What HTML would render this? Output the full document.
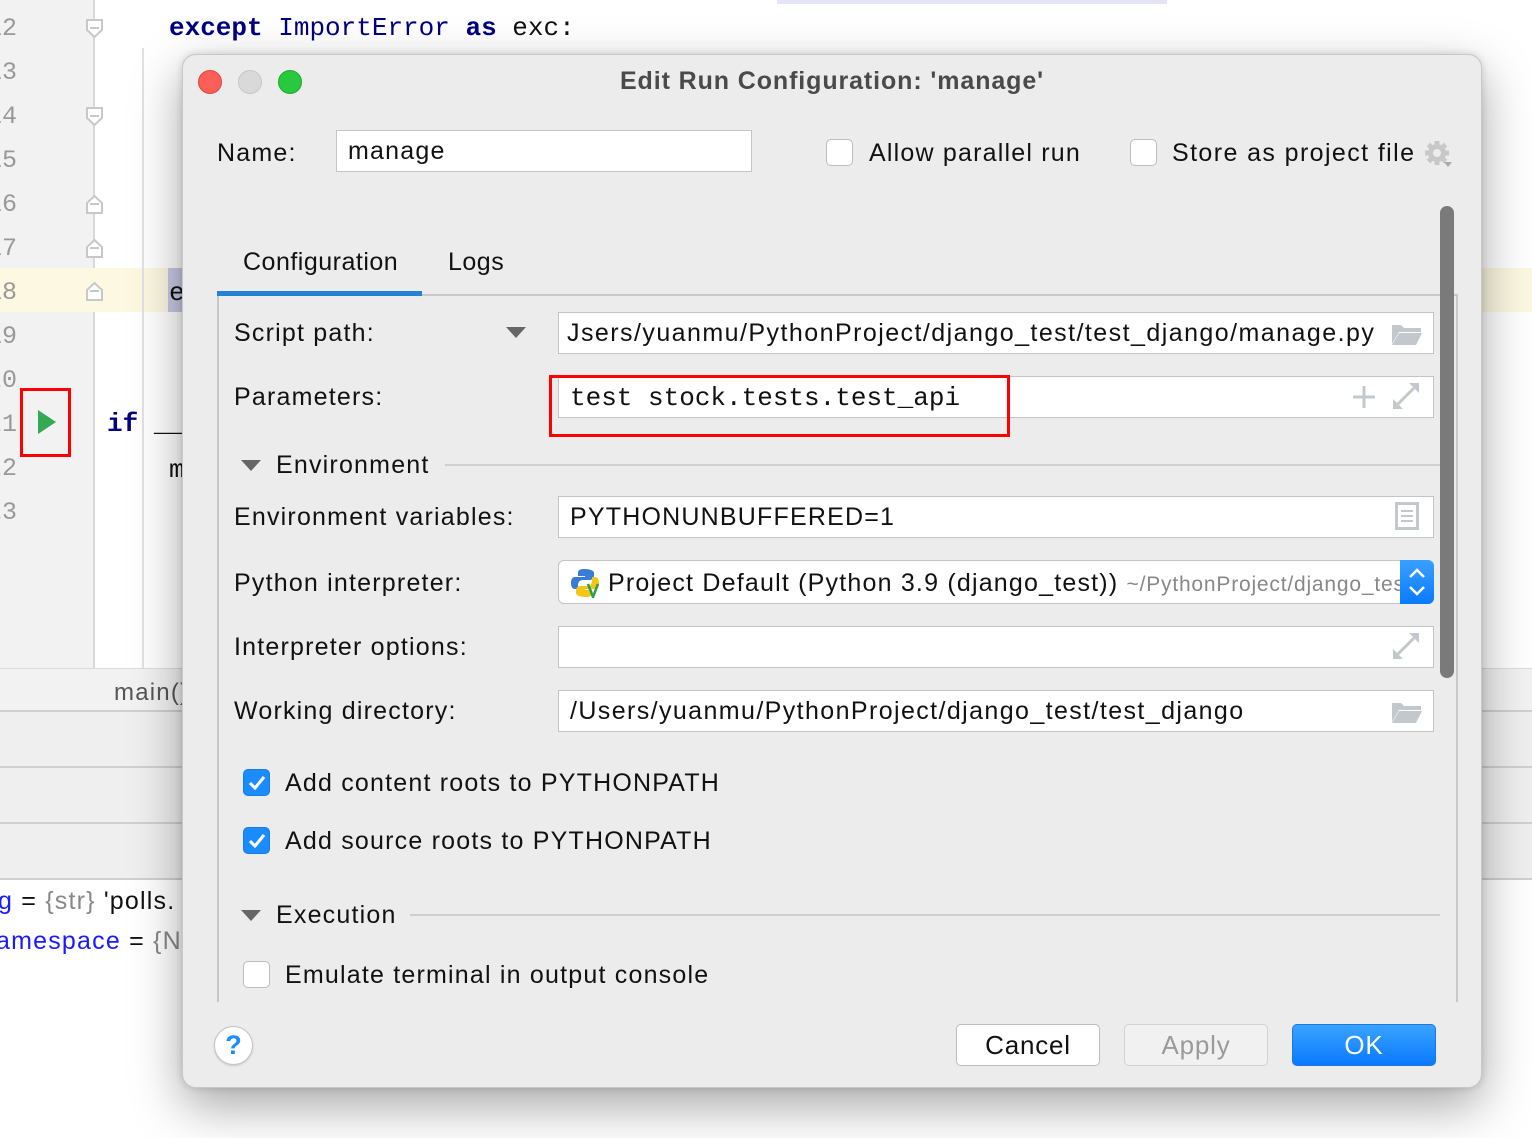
<!DOCTYPE html>
<html><head><meta charset="utf-8">
<style>
*{margin:0;padding:0;box-sizing:border-box}
body{width:1532px;height:1138px;position:relative;overflow:hidden;background:#fff;font-family:"Liberation Sans",sans-serif;color:#111}
.a{position:absolute}
.mono{font-family:"Liberation Mono",monospace}
.ln{position:absolute;left:-20px;width:37px;text-align:right;color:#999;font-family:"Liberation Mono",monospace;font-size:25px}
.t{position:absolute;font-size:25px;white-space:nowrap;letter-spacing:1.2px}
.fld{position:absolute;background:#fff;border:1px solid #c4c4c4}
.cb{position:absolute;width:27px;height:27px;border-radius:5px}
.cb.on{background:#1a8cff;border:1px solid #1a7ae6}
.cb.off{background:#fff;border:1px solid #bdbdbd}
.btn{position:absolute;height:42px;border-radius:5px;font-size:26px;text-align:center;line-height:40px;letter-spacing:.8px}
</style></head><body>
<div class="a" style="left:0;top:0;width:95px;height:668px;background:#f2f2f2"></div>
<div class="a" style="left:93px;top:0;width:2px;height:668px;background:#d8d8d8"></div>
<div class="a" style="left:0;top:268px;width:1532px;height:44px;background:#fdf8e1"></div>
<div class="a" style="left:168px;top:268px;width:16px;height:44px;background:#c9c9e6"></div>
<div class="a" style="left:777px;top:0;width:390px;height:4px;background:#e4e4f6"></div>
<div class="a" style="left:142px;top:48px;width:2px;height:620px;background:#e2e2e2"></div>
<div class="ln" style="top:14px">12</div><div class="ln" style="top:58px">13</div><div class="ln" style="top:102px">14</div><div class="ln" style="top:146px">15</div><div class="ln" style="top:190px">16</div><div class="ln" style="top:234px">17</div><div class="ln" style="top:278px">18</div><div class="ln" style="top:322px">19</div><div class="ln" style="top:366px">20</div><div class="ln" style="top:410px">21</div><div class="ln" style="top:454px">22</div><div class="ln" style="top:498px">23</div>
<svg class="a" style="left:84px;top:0" width="22" height="310"><g fill="#fff" stroke="#c8c8c8" stroke-width="2"><path d="M3 20h15v10l-7.5 7l-7.5-7z"/><path d="M3 108h15v10l-7.5 7l-7.5-7z"/><path d="M3 213h15v-10l-7.5-7l-7.5 7z"/><path d="M3 257h15v-10l-7.5-7l-7.5 7z"/><path d="M3 300h15v-10l-7.5-7l-7.5 7z"/></g><g stroke="#c8c8c8" stroke-width="2"><path d="M6 28h9M6 116h9M6 204h9M6 248h9M6 291h9"/></g></svg>
<div class="a" style="left:20px;top:388px;width:51px;height:69px;border:3px solid #f00"></div>
<svg class="a" style="left:38px;top:410px" width="20" height="24"><path d="M0 0L18 12L0 24z" fill="#34a853"/></svg>
<div class="a mono" style="left:169px;top:13px;font-size:26px;white-space:pre"><b style="color:#000080">except</b> <span style="color:#000080">ImportError</span> <b style="color:#000080">as</b> exc:</div>
<div class="a mono" style="left:107px;top:409px;font-size:26px;white-space:pre"><b style="color:#000080">if</b> __</div>
<div class="a mono" style="left:169px;top:455px;font-size:26px">m</div>
<div class="a mono" style="left:169px;top:278px;font-size:26px">e</div>
<div class="a" style="left:0;top:668px;width:1532px;height:212px;background:#efefef"></div>
<div class="a" style="left:0;top:668px;width:1532px;height:44px;background:#f2f2f2;border-top:1px solid #ddd;border-bottom:2px solid #d0d0d0"></div>
<div class="a" style="left:0;top:766px;width:1532px;height:2px;background:#d0d0d0"></div>
<div class="a" style="left:0;top:822px;width:1532px;height:2px;background:#d0d0d0"></div>
<div class="a" style="left:0;top:878px;width:1532px;height:2px;background:#d0d0d0"></div>
<div class="t" style="left:114px;top:679px;color:#555;font-size:24px">main()</div>
<div class="t" style="left:-2px;top:887px"><span style="color:#1a1aff">g</span> = <span style="color:#888">{str}</span> 'polls.</div>
<div class="t" style="left:-4px;top:927px"><span style="color:#1a1aff">amespace</span> = <span style="color:#888">{N</span></div>
<div class="a" style="left:182px;top:54px;width:1300px;height:1034px;background:#ececec;border-radius:14px;border:1px solid #c8c8c8;box-shadow:0 18px 50px rgba(0,0,0,.35),0 0 8px rgba(0,0,0,.15)"></div>
<div class="a" style="left:198px;top:70px;width:24px;height:24px;border-radius:50%;background:#fc5f57;border:1px solid #e0443e"></div>
<div class="a" style="left:238px;top:70px;width:24px;height:24px;border-radius:50%;background:#d9d9d9;border:1px solid #c6c6c6"></div>
<div class="a" style="left:278px;top:70px;width:24px;height:24px;border-radius:50%;background:#28c840;border:1px solid #1aab29"></div>
<div class="t" style="left:0;width:1664px;text-align:center;top:67px;font-weight:bold;color:#4a4a4a;font-size:25px;letter-spacing:.9px">Edit Run Configuration: 'manage'</div>
<div class="t" style="left:217px;top:139px">Name:</div>
<div class="fld" style="left:336px;top:130px;width:416px;height:42px"></div>
<div class="t" style="left:348px;top:137px">manage</div>
<div class="cb off" style="left:826px;top:139px"></div>
<div class="t" style="left:869px;top:139px">Allow parallel run</div>
<div class="cb off" style="left:1130px;top:139px"></div>
<div class="t" style="left:1172px;top:139px;letter-spacing:1.4px">Store as project file</div>
<svg class="a" style="left:1422px;top:138px" width="32" height="32" viewBox="0 0 32 32"><g fill="#c8c8c8"><circle cx="15" cy="15" r="9"/><g stroke="#c8c8c8" stroke-width="5"><path d="M15 3v24M3 15h24M6.5 6.5l17 17M23.5 6.5l-17 17"/></g></g><circle cx="15" cy="15" r="4" fill="#ececec"/><path d="M22 24h8l-4 5z" fill="#aaa"/></svg>
<div class="t" style="left:243px;top:248px;letter-spacing:.5px">Configuration</div>
<div class="t" style="left:448px;top:248px;letter-spacing:.5px">Logs</div>
<div class="a" style="left:217px;top:294px;width:1241px;height:2px;background:#c8c8c8"></div>
<div class="a" style="left:217px;top:291px;width:205px;height:5px;background:#2680d6"></div>
<div class="a" style="left:217px;top:296px;width:2px;height:706px;background:#c8c8c8"></div>
<div class="a" style="left:1456px;top:296px;width:2px;height:706px;background:#c8c8c8"></div>
<div class="a" style="left:1440px;top:206px;width:14px;height:472px;background:#7a7a7a;border-radius:7px"></div>
<div class="t" style="left:234px;top:319px">Script path:</div>
<svg class="a" style="left:506px;top:327px" width="20" height="12"><path d="M0 0h20L10 11z" fill="#666"/></svg>
<div class="fld" style="left:558px;top:312px;width:876px;height:42px"></div>
<div class="t" style="left:567px;top:319px;width:815px;overflow:hidden;letter-spacing:1.45px">Jsers/yuanmu/PythonProject/django_test/test_django/manage.py</div>
<svg class="a" style="left:1391px;top:322px" width="32" height="24"><path d="M1 3h9l3 3h17v4H8L1 22z" fill="#c3c8cc"/><path d="M8 11h23l-6 12H1z" fill="#c3c8cc"/></svg>
<div class="t" style="left:234px;top:383px">Parameters:</div>
<div class="fld" style="left:558px;top:376px;width:876px;height:42px"></div>
<div class="t mono" style="left:570px;top:383px;font-size:26px;letter-spacing:0">test stock.tests.test_api</div>
<svg class="a" style="left:1353px;top:386px" width="22" height="22"><path d="M11 0v22M0 11h22" stroke="#c3c8cc" stroke-width="3"/></svg>
<svg class="a" style="left:1393px;top:383px" width="26" height="26"><g fill="#c3c8cc"><path d="M26 0v10l-10-10z"/><path d="M0 26v-10l10 10z"/></g><path d="M21 5l-16 16" stroke="#c3c8cc" stroke-width="3"/></svg>
<div class="a" style="left:549px;top:375px;width:461px;height:62px;border:3px solid #f00"></div>
<svg class="a" style="left:241px;top:460px" width="20" height="12"><path d="M0 0h20L10 11z" fill="#666"/></svg>
<div class="t" style="left:276px;top:451px">Environment</div>
<div class="a" style="left:445px;top:464px;width:995px;height:2px;background:#cfcfcf"></div>
<div class="t" style="left:234px;top:503px">Environment variables:</div>
<div class="fld" style="left:558px;top:496px;width:876px;height:42px"></div>
<div class="t" style="left:570px;top:503px">PYTHONUNBUFFERED=1</div>
<svg class="a" style="left:1395px;top:502px" width="24" height="28"><rect width="24" height="28" fill="#c3c8cc"/><rect x="3" y="3" width="18" height="22" fill="#fff"/><path d="M6 9h12M6 14h12M6 19h12" stroke="#c3c8cc" stroke-width="2"/></svg>
<div class="t" style="left:234px;top:569px">Python interpreter:</div>
<div class="a" style="left:558px;top:560px;width:876px;height:44px;background:#fff;border:1px solid #c4c4c4;border-radius:6px;overflow:hidden"></div>
<svg class="a" style="left:571px;top:568px" width="32" height="30"><path d="M13 1c-6 0-6 3-6 4v3h7v1H4C1 9 0 12 0 15s1 6 4 6h3v-4c0-3 2-5 5-5h7c2 0 4-2 4-4V5c0-2-3-4-10-4z" fill="#3a7bd5"/><path d="M15 29c6 0 6-3 6-4v-3h-7v-1h10c3 0 4-3 4-6s-1-6-4-6h-3v4c0 3-2 5-5 5H9c-2 0-4 2-4 4v3c0 2 3 4 10 4z" fill="#f5c518"/><path d="M17 16l5 13l5-13" stroke="#2aa04a" stroke-width="2.5" fill="none"/></svg>
<div class="t" style="left:608px;top:569px;width:792px;overflow:hidden">Project Default (Python 3.9 (django_test)) <span style="color:#888;font-size:21px;letter-spacing:.8px">~/PythonProject/django_test</span></div>
<div class="a" style="left:1400px;top:560px;width:34px;height:44px;background:linear-gradient(#3aa0ff,#0a7aff);border-radius:0 6px 6px 0"></div>
<svg class="a" style="left:1407px;top:566px" width="20" height="32"><path d="M3 11l7-7l7 7M3 21l7 7l7-7" stroke="#fff" stroke-width="2.5" fill="none"/></svg>
<div class="t" style="left:234px;top:633px">Interpreter options:</div>
<div class="fld" style="left:558px;top:626px;width:876px;height:42px"></div>
<svg class="a" style="left:1393px;top:633px" width="26" height="26"><g fill="#c3c8cc"><path d="M26 0v10l-10-10z"/><path d="M0 26v-10l10 10z"/></g><path d="M21 5l-16 16" stroke="#c3c8cc" stroke-width="3"/></svg>
<div class="t" style="left:234px;top:697px">Working directory:</div>
<div class="fld" style="left:558px;top:690px;width:876px;height:42px"></div>
<div class="t" style="left:570px;top:697px;letter-spacing:1.4px">/Users/yuanmu/PythonProject/django_test/test_django</div>
<svg class="a" style="left:1391px;top:700px" width="32" height="24"><path d="M1 3h9l3 3h17v4H8L1 22z" fill="#c3c8cc"/><path d="M8 11h23l-6 12H1z" fill="#c3c8cc"/></svg>
<div class="cb on" style="left:243px;top:769px"></div>
<svg class="a" style="left:247px;top:773px" width="20" height="20"><path d="M3 10l5 5l9-11" stroke="#fff" stroke-width="3" fill="none"/></svg>
<div class="t" style="left:285px;top:769px">Add content roots to PYTHONPATH</div>
<div class="cb on" style="left:243px;top:827px"></div>
<svg class="a" style="left:247px;top:831px" width="20" height="20"><path d="M3 10l5 5l9-11" stroke="#fff" stroke-width="3" fill="none"/></svg>
<div class="t" style="left:285px;top:827px">Add source roots to PYTHONPATH</div>
<svg class="a" style="left:241px;top:910px" width="20" height="12"><path d="M0 0h20L10 11z" fill="#666"/></svg>
<div class="t" style="left:276px;top:901px">Execution</div>
<div class="a" style="left:410px;top:914px;width:1030px;height:2px;background:#cfcfcf"></div>
<div class="cb off" style="left:243px;top:961px"></div>
<div class="t" style="left:285px;top:961px">Emulate terminal in output console</div>
<div class="a" style="left:214px;top:1026px;width:39px;height:39px;border-radius:50%;background:#fff;border:1px solid #c4c4c4;box-shadow:0 1px 2px rgba(0,0,0,.15);color:#1a8cff;font-size:27px;font-weight:bold;text-align:center;line-height:37px">?</div>
<div class="btn" style="left:956px;top:1024px;width:144px;background:#fff;border:1px solid #bdbdbd">Cancel</div>
<div class="btn" style="left:1124px;top:1024px;width:144px;background:#f1f1f1;border:1px solid #d2d2d2;color:#9a9a9a">Apply</div>
<div class="btn" style="left:1292px;top:1024px;width:144px;background:linear-gradient(#3aa3ff,#0a78ff);border:1px solid #1a78e0;color:#fff">OK</div>
</body></html>
